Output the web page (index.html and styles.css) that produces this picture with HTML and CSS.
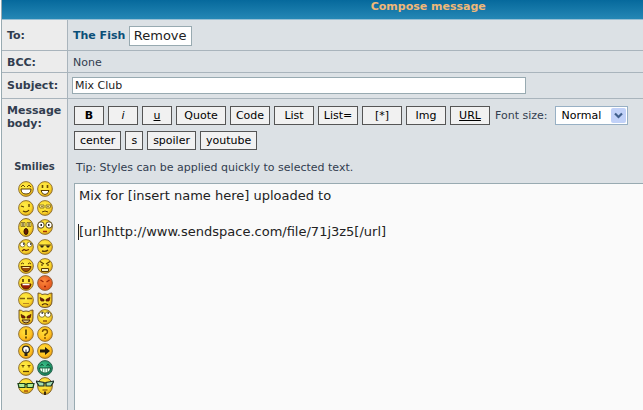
FILE: index.html
```
<!doctype html>
<html lang="en">
  <head>
    <meta charset="UTF-8" />
    <meta name="viewport" content="width=device-width, initial-scale=1.0" />
    <title>Compose message</title>
    <link rel="stylesheet" href="styles.css">
  </head>
  <body>
    <svg class="defs" aria-hidden="true">
      <defs>
        <radialGradient id="yellow" cx="42%" cy="38%" r="65%">
          <stop offset="0" stop-color="#fff04a" />
          <stop offset="0.7" stop-color="#fbd52a" />
          <stop offset="1" stop-color="#d89c14" />
        </radialGradient>
        <radialGradient id="amber" cx="42%" cy="38%" r="65%">
          <stop offset="0" stop-color="#ffe03a" />
          <stop offset="0.7" stop-color="#ffc020" />
          <stop offset="1" stop-color="#dc8c10" />
        </radialGradient>
        <radialGradient id="orange" cx="42%" cy="38%" r="65%">
          <stop offset="0" stop-color="#ff8a3c" />
          <stop offset="1" stop-color="#e0501c" />
        </radialGradient>
        <radialGradient id="green" cx="42%" cy="38%" r="65%">
          <stop offset="0" stop-color="#3cc48c" />
          <stop offset="1" stop-color="#148058" />
        </radialGradient>
        <circle id="face" cx="8" cy="8" r="7.400" fill="url(#yellow)" stroke="#8a6c30" stroke-width=".9" />
        <circle id="disc" cx="8" cy="8" r="7.400" fill="url(#amber)" stroke="#8a6c30" stroke-width=".9" />
        <path id="horns" d="M1 1q3 0 4 1.500 3-1 6 0Q12 1 15 1v8q0 6.500-7 6.500T1 9z" fill="url(#yellow)" stroke="#6a4c20" stroke-width=".9" />
      </defs>
    </svg>

    <form class="compose">
      <h1 class="title">Compose message</h1>

      <div class="row to">
        <div class="name">To:</div>
        <div class="field"><a href="#">The Fish</a> <button type="button" class="remove">Remove</button></div>
      </div>

      <div class="row bcc">
        <div class="name">BCC:</div>
        <div class="field">None</div>
      </div>

      <div class="row subject">
        <label class="name" for="subject">Subject:</label>
        <div class="field"><input type="text" id="subject" value="Mix Club"></div>
      </div>

      <div class="row message">
        <div class="name">
          <label for="message">Message body:</label>
          <h2>Smilies</h2>
          <div class="smilies">
            <!-- grin, smile -->
            <svg viewBox="0 0 16 16"><use href="#face" /><path d="M3 6l2-2 2 2M9 6l2-2 2 2" fill="none" stroke="#6a4800" /><path d="M3 8h10q0 5-5 5T3 8z" fill="#fff" stroke="#5a3c00" /></svg>
            <svg viewBox="0 0 16 16"><use href="#face" /><path d="M5.500 4v3M10.500 4v3" stroke="#6a4800" stroke-width="1.600" /><path d="M4 9.500h8q-1 4-4 4t-4-4z" fill="#fff" stroke="#5a3c00" /></svg>
            <!-- wink, worried -->
            <svg viewBox="0 0 16 16"><use href="#face" /><path d="M3 6l3 1M11 4v3M5 11q4 2 6-1" fill="none" stroke="#5a3c00" stroke-width="1.300" /></svg>
            <svg viewBox="0 0 16 16"><use href="#face" /><path d="M2 5h5v3H3zM9 5h5l-1 3H9z" fill="#ffe98a" stroke="#7a6418" stroke-width=".8" /><path d="M4.500 6.500h1M10.500 6.500h1" stroke="#3a2800" /><path d="M5 12q3-2 6 0" fill="none" stroke="#5a3c00" /></svg>
            <!-- shout, stare -->
            <svg class="tall" viewBox="0 0 16 19"><ellipse cx="8" cy="9.500" rx="7.400" ry="9" fill="url(#yellow)" stroke="#8a6c30" /><path d="M3 4.500h4v4H3zM9 4.500h4v4H9z" fill="#fff3a0" stroke="#7a6418" stroke-width=".8" /><path d="M5 5v3M11 5v3" stroke="#3a2800" /><ellipse cx="8" cy="13.500" rx="2" ry="3" fill="#6a1c00" stroke="#2c1400" /></svg>
            <svg viewBox="0 0 16 16"><use href="#face" /><g fill="#fff" stroke="#5a4818"><circle cx="4" cy="6" r="3.200" /><circle cx="12" cy="6" r="3.200" /></g><path d="M3.500 6h1.500M11 6h1.500" stroke="#222" stroke-width="2" /><path d="M6 12.500h4" stroke="#a03000" stroke-width="1.500" /></svg>
            <!-- unsure, sly -->
            <svg viewBox="0 0 16 16"><use href="#face" /><g fill="#fff" stroke="#7a6418" stroke-width=".8"><circle cx="4.500" cy="5.500" r="2.500" /><circle cx="11.500" cy="5.500" r="2.500" /></g><path d="M5 5h1.500M12 5h1.500" stroke="#222" stroke-width="1.500" /><path d="M4 12l2-1.500 2 1 3-1" fill="none" stroke="#6a2800" stroke-width="1.300" /></svg>
            <svg viewBox="0 0 16 16"><use href="#face" /><path d="M2 6h12" stroke="#6a5010" /><path d="M3 6.500h4L6 8.500H4zM9 6.500h4l-1 2h-2z" fill="#2c2010" /><path d="M5 12q4 1 6-1" fill="none" stroke="#5a3c00" stroke-width="1.300" /></svg>
            <!-- laugh, angry -->
            <svg viewBox="0 0 16 16"><use href="#face" /><path d="M3 6q1.500-2 3 0M10 6q1.500-2 3 0" fill="none" stroke="#5a3c00" /><path d="M3 8.500h10q-1 5-5 5t-5-5z" fill="#a04c08" stroke="#5a3000" /><path d="M4.500 9.500h7" stroke="#ffe8a0" /></svg>
            <svg viewBox="0 0 16 16"><use href="#face" /><path d="M3 3.500l4 2.500M13 3.500L9 6M5 6v2M11 6v2" stroke="#5a3c00" stroke-width="1.200" /><path d="M4.500 10.500h7v3h-7z" fill="#f4f0c8" stroke="#5a3c00" /></svg>
            <!-- happy, blushing -->
            <svg viewBox="0 0 16 16"><use href="#face" /><path d="M5 4v3M11 4v3" stroke="#4a3000" stroke-width="1.600" /><path d="M3 9h10q-1 5-5 5T3 9z" fill="#9c1c04" stroke="#5a2000" /><path d="M4.500 9.500h7" stroke="#fff" stroke-width="1.500" /></svg>
            <svg viewBox="0 0 16 16"><circle cx="8" cy="8" r="7.400" fill="url(#orange)" stroke="#8a5c34" stroke-width=".9" /><path d="M3.500 5l3 2M12.500 5l-3 2M7 11.500h2" stroke="#9a2408" stroke-width="1.300" /></svg>
            <!-- sleepy, devil -->
            <svg viewBox="0 0 16 16"><use href="#face" /><path d="M2 6.500h5M9 6.500h5" stroke="#806010" stroke-width="1.300" /><path d="M5 11.500h6" stroke="#b88420" /></svg>
            <svg viewBox="0 0 16 16"><use href="#horns" /><path d="M3 5.500l4 2V9H4zM13 5.500l-4 2V9h3z" fill="#7c1804" stroke="#4a1c04" stroke-width=".8" /><path d="M5 13q3-2.500 6 0" fill="none" stroke="#4a2000" stroke-width="1.200" /></svg>
            <!-- grinning devil, rolling eyes -->
            <svg viewBox="0 0 16 16"><use href="#horns" /><path d="M3 5.500l4 2V9H4zM13 5.500l-4 2V9h3z" fill="#7c1804" stroke="#4a1c04" stroke-width=".8" /><path d="M4 11h8q-1 3-4 3t-4-3z" fill="#d8c890" stroke="#4a2000" /></svg>
            <svg viewBox="0 0 16 16"><use href="#face" /><g fill="#fff" stroke="#7a6418" stroke-width=".8"><circle cx="5" cy="5.500" r="2.800" /><circle cx="11" cy="5.500" r="2.800" /></g><path d="M4.500 4h1.500M10.500 4h1.500" stroke="#222" stroke-width="1.600" /><path d="M6 12h4" stroke="#7a3c00" stroke-width="1.300" /></svg>
            <!-- exclamation, question -->
            <svg viewBox="0 0 16 16"><use href="#disc" /><path d="M8 3.500v5.500M8 10.500v2" stroke="#4a3800" stroke-width="1.600" /></svg>
            <svg viewBox="0 0 16 16"><use href="#disc" /><path d="M5.500 6q0-2.500 2.500-2.500T10.500 6Q10.500 7.500 8 8.500V10M8 11v2" fill="none" stroke="#7a5000" stroke-width="1.400" /></svg>
            <!-- idea, arrow -->
            <svg viewBox="0 0 16 16"><use href="#disc" /><circle cx="8" cy="6.500" r="3.400" fill="#fff" stroke="#222" stroke-width="1.200" /><path d="M8 6.500V11" stroke="#222" /><path d="M6.500 10h3v3h-3z" fill="#2c2414" /></svg>
            <svg viewBox="0 0 16 16"><use href="#disc" /><path d="M3 6.500h5V4l5 4-5 4V9.500H3z" fill="#20180c" /></svg>
            <!-- neutral, green grin -->
            <svg viewBox="0 0 16 16"><use href="#face" /><path d="M3.500 5.500h3M9.500 5.500h3M5 6v1.500M11 6v1.500" stroke="#6a4800" stroke-width="1.200" /><path d="M5 11.500h6" stroke="#5a3c00" stroke-width="1.300" /></svg>
            <svg viewBox="0 0 16 16"><circle cx="8" cy="8" r="7.400" fill="url(#green)" stroke="#2c6450" /><path d="M3.500 5.500q1.500-2 3 0M9.500 5.500q1.500-2 3 0" fill="none" stroke="#053820" /><path d="M2.500 8h11q-.500 5-5.500 5T2.500 8z" fill="#eafff2" stroke="#053820" stroke-width=".8" /><path d="M5.500 8v4M8 8v5M10.500 8v4" stroke="#2c8860" stroke-width=".7" /></svg>
            <!-- geek, cool -->
            <svg class="glasses" viewBox="0 0 18 18"><circle cx="9" cy="9" r="7.400" fill="url(#yellow)" stroke="#8a6c30" /><path d="M1 6.500h7v4H2zM10 6.500h7l-1 4h-6zM8 7.500h2" fill="#b4ec94" stroke="#1c4018" stroke-width="1.200" /><path d="M7 14h4" stroke="#a04000" stroke-width="1.300" /></svg>
            <svg class="glasses" viewBox="0 0 18 18"><ellipse cx="9" cy="9" rx="7.400" ry="8.400" fill="url(#yellow)" stroke="#8a6c30" /><path d="M0 4l8 1.500v3.500H3zM18 4l-8 1.500v3.500h5zM8 6h2" fill="#a4dcb0" stroke="#182c24" stroke-width="1.200" /><path d="M6.500 13h5" stroke="#7a3c00" /><path d="M8 14.500h2V18H8z" fill="#3c2808" /></svg>
          </div>
        </div>
        <div class="field">
          <div class="tools">
            <button type="button"><b>B</b></button>
            <button type="button"><i>i</i></button>
            <button type="button"><u>u</u></button>
            <button type="button" class="wide">Quote</button>
            <button type="button" class="mid">Code</button>
            <button type="button" class="mid">List</button>
            <button type="button" class="mid">List=</button>
            <button type="button" class="mid">[*]</button>
            <button type="button" class="mid">Img</button>
            <button type="button" class="mid"><u>URL</u></button>
            <label for="size">Font size:</label>
            <div class="select">
              <select id="size"><option>Normal</option></select>
              <svg viewBox="0 0 15 15"><rect width="15" height="15" rx="2" fill="#c1d1f8" /><path d="M4 5.500l3.500 3.500L11 5.500" fill="none" stroke="#41608c" stroke-width="2.200" /></svg>
            </div>
          </div>
          <div class="tools">
            <button type="button" class="fit">center</button>
            <button type="button" class="fit">s</button>
            <button type="button" class="fit">spoiler</button>
            <button type="button" class="fit">youtube</button>
          </div>
          <p class="tip">Tip: Styles can be applied quickly to selected text.</p>
          <div class="editor">
            <textarea id="message">Mix for [insert name here] uploaded to

[url]http://www.sendspace.com/file/71j3z5[/url]</textarea>
            <span class="caret"></span>
          </div>
        </div>
      </div>
    </form>
  </body>
</html>
```

FILE: styles.css
```
* {
  box-sizing: border-box;
}

body {
  margin: 0;
  overflow: hidden;
  background: #fff;
  color: #323d4f;
  font: 11px/13px Verdana, "DejaVu Sans", sans-serif;
}

button,
input,
select,
textarea {
  margin: 0;
  border-radius: 0;
  color: #000;
  font: inherit;
}

.defs {
  position: absolute;
  width: 0;
  height: 0;
}

.compose {
  display: flex;
  flex-direction: column;
  height: 100vh;
  margin-left: 1px;
  border-left: 1px solid #98aab1;
}

.title {
  height: 20px;
  margin: 0;
  padding-left: 33%;
  border-bottom: 1px solid #98bfd4;
  background: linear-gradient(#06699c, #2587b5);
  color: #f0b878;
  font-size: 11px;
  line-height: 13px;
  text-align: center;
}

.row {
  display: flex;
  border-bottom: 1px solid #a9b4bc;
}

.name {
  flex: none;
  width: 66px;
  padding-left: 5px;
  border-right: 1px solid #a9b4bc;
  background: #ececec;
  font-weight: bold;
}

.field {
  flex: 1;
  min-width: 0;
  padding-left: 5px;
  background: #dce1e5;
}

.to,
.bcc,
.subject {
  flex: none;
}

.to {
  height: 31px;
  line-height: 31px;
}

.bcc {
  height: 22px;
  line-height: 23px;
}

.subject {
  height: 26px;
  line-height: 26px;
}

a {
  color: #0b4f78;
  font-weight: bold;
  text-decoration: none;
}

.remove {
  height: 20px;
  padding: 0 4px;
  border: 1px solid #98aab1;
  background: #fff;
  color: #222;
  font-size: 13px;
  line-height: 18px;
  vertical-align: middle;
}

.subject .field {
  display: flex;
  align-items: center;
  padding-left: 4px;
}

.subject input {
  width: 454px;
  max-width: 95%;
  height: 17px;
  padding: 0 2px;
  border: 1px solid #98aab1;
  color: #222;
}

.message {
  flex: 1;
  min-height: 0;
  border-bottom: 0;
}

.message .name {
  padding-top: 5px;
}

h2 {
  margin: 30px 0 6px;
  padding-right: 5px;
  font-size: 10px;
  line-height: 13px;
  text-align: center;
}

.smilies {
  display: grid;
  grid-template-columns: 16px 16px;
  grid-template-rows: 19px 19px 20px 20px repeat(7, 17px) 20px;
  column-gap: 3px;
  align-items: center;
  justify-items: center;
  padding-left: 11px;
}

.smilies svg {
  width: 16px;
  height: 16px;
}

.smilies .tall {
  height: 19px;
}

.smilies .glasses {
  width: 18px;
  height: 18px;
}

.message .field {
  display: flex;
  flex-direction: column;
  padding: 7px 0 0 6px;
}

.tools {
  display: flex;
  gap: 4px;
  margin-bottom: 5px;
}

.tools button {
  flex: none;
  width: 30px;
  height: 19px;
  padding: 0;
  border: 1px solid #555;
  background: #f1f1f1;
}

.tools .wide {
  width: 50px;
}

.tools .mid {
  width: 40px;
}

.tools .fit {
  width: auto;
  padding: 0 5px;
}

.tools label {
  flex: none;
  padding: 0 4px 0 1px;
  line-height: 20px;
}

.select {
  position: relative;
  flex: none;
  width: 73px;
  height: 19px;
}

.select select {
  width: 100%;
  height: 100%;
  padding: 0 5px;
  border: 1px solid #98b0c4;
  background: #fff;
  appearance: none;
}

.select svg {
  position: absolute;
  top: 2px;
  right: 2px;
  width: 15px;
  height: 15px;
  pointer-events: none;
}

.tip {
  margin: 6px 2px 9px;
}

.editor {
  position: relative;
  display: flex;
  flex: 1;
  min-height: 0;
}

textarea {
  flex: 1;
  border: 1px solid #98aab1;
  border-width: 1px 0 0 1px;
  padding: 3px 4px;
  resize: none;
  background: #fafafa;
  color: #222;
  font-size: 13px;
  line-height: 18px;
}

.caret {
  position: absolute;
  top: 41px;
  left: 4px;
  width: 1px;
  height: 16px;
  background: #222;
}
```
